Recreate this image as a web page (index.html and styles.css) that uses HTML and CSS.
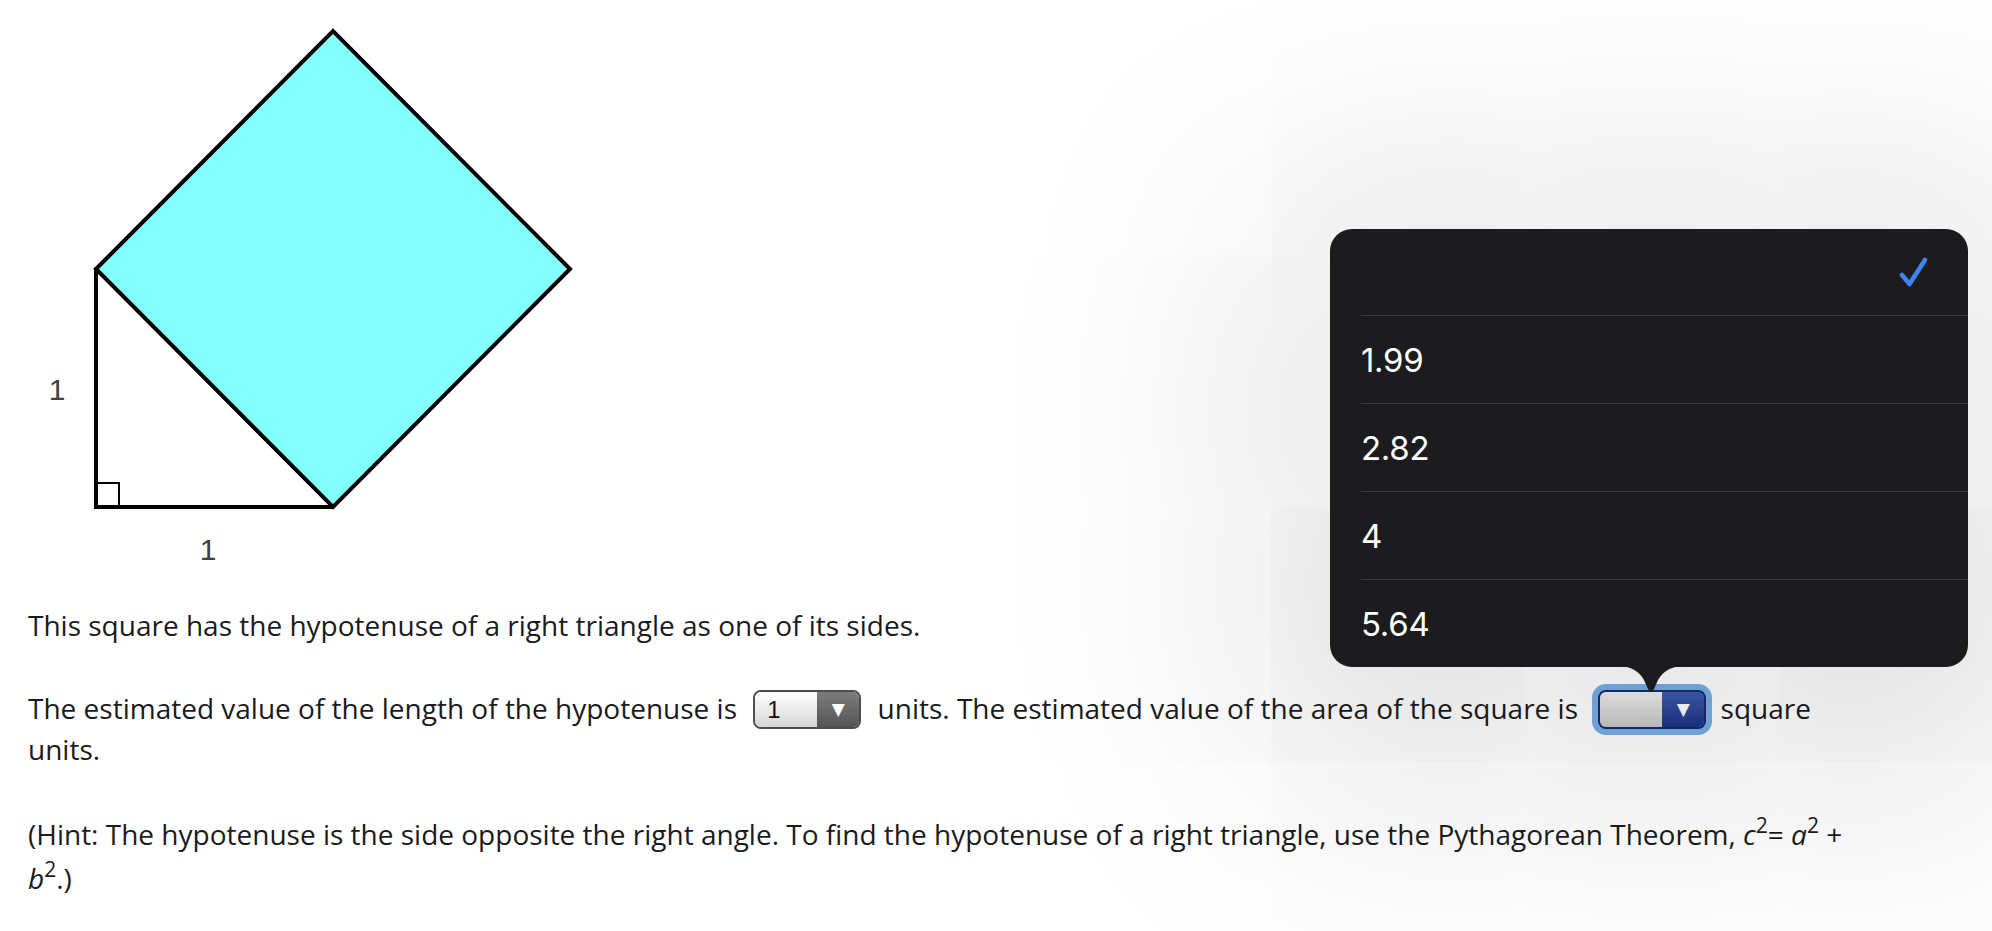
FILE: index.html
```html
<!DOCTYPE html>
<html lang="en">
<head>
<meta charset="utf-8">
<title>Hypotenuse square</title>
<link rel="stylesheet" href="styles.css">
</head>
<body>
<main class="page">
  <figure class="diagram">
    <svg class="diagram-svg" width="640" height="605" viewBox="0 0 640 605">
      <polygon points="96,269 333,31 570,269 333,507" fill="#84ffff" stroke="#000" stroke-width="4" stroke-linejoin="miter"/>
      <polyline points="96,269 96,507 333,507" fill="none" stroke="#000" stroke-width="4"/>
      <polyline points="96,483 119,483 119,507" fill="none" stroke="#000" stroke-width="2"/>
      <text x="57" y="400" class="lbl" text-anchor="middle">1</text>
      <text x="208" y="560" class="lbl" text-anchor="middle">1</text>
    </svg>
  </figure>
  <p class="q">This square has the hypotenuse of a right triangle as one of its sides.</p>
  <p class="q">The estimated value of the length of the hypotenuse is <span class="sel sel-gray"><span class="sel-val">1</span><span class="sel-btn">&#9660;</span></span> units. The estimated value of the area of the square is <span class="ring"><span class="sel sel-blue"><span class="sel-val"></span><span class="sel-btn">&#9660;</span></span></span> square units.</p>
  <p class="q hint">(Hint: The hypotenuse is the side opposite the right angle. To find the hypotenuse of a right triangle, use the Pythagorean Theorem, <i>c</i><sup>2</sup>= <i>a</i><sup>2</sup> + <i>b</i><sup>2</sup>.)</p>
</main>
<div class="popover">
  <ul class="menu">
    <li class="item item-first"><span class="check"><svg width="34" height="34" viewBox="0 0 34 34"><path d="M6 20 L13.5 29 L29 5" fill="none" stroke="#3b86f3" stroke-width="4.6" stroke-linecap="round" stroke-linejoin="round"/></svg></span></li>
    <li class="item"><span class="item-text">1.99</span></li>
    <li class="item"><span class="item-text">2.82</span></li>
    <li class="item"><span class="item-text">4</span></li>
    <li class="item"><span class="item-text">5.64</span></li>
  </ul>
  <svg class="arrow" width="66" height="27" viewBox="0 0 66 27"><path d="M0 0 Q18 0 26 14 L30 23 Q33 28 36 23 L40 14 Q48 0 66 0 Z" fill="#1c1c1e"/></svg>
</div>
</body>
</html>
```

FILE: styles.css
```css
html, body {
  margin: 0;
  padding: 0;
  background: #ffffff;
}
body {
  width: 1992px;
  height: 931px;
  overflow: hidden;
  position: relative;
  font-family: "Open Sans", "Noto Sans", sans-serif;
  color: #1b1b1b;
}
.page {
  padding: 0 112px 0 28px;
}
.diagram {
  margin: 0 0 0 -28px;
}
.diagram-svg {
  display: block;
}
.lbl {
  font-family: "Liberation Sans", Arial, sans-serif;
  font-size: 30px;
  fill: #404040;
}
.q {
  margin: 0 0 42px 0;
  font-size: 28px;
  line-height: 41px;
}
.hint {
  line-height: 44px;
}
.q i {
  font-style: italic;
}
.q sup {
  font-size: 21px;
  line-height: 0;
  vertical-align: 12px;
}
.sel {
  display: inline-flex;
  vertical-align: middle;
  width: 108px;
  height: 39px;
  box-sizing: border-box;
  border-radius: 8px;
  overflow: hidden;
  position: relative;
  top: -2px;
  line-height: 1;
  margin-top: -4px;
  margin-bottom: -4px;
}
.sel-gray {
  border: 2px solid #4d4d4d;
  margin-left: 9px;
  margin-right: 9px;
}
.sel-val {
  flex: 1;
  display: flex;
  align-items: center;
  padding-left: 12px;
  font-family: "Liberation Sans", Arial, sans-serif;
  font-size: 24px;
  color: #111;
}
.sel-btn {
  width: 42px;
  display: flex;
  align-items: center;
  justify-content: center;
  color: #fff;
  font-family: "DejaVu Sans", sans-serif;
  font-size: 17px;
}
.sel-gray .sel-val {
  background: linear-gradient(#ffffff, #d6d6d6);
}
.sel-gray .sel-btn {
  background: linear-gradient(#7c7c7c, #555555);
}
.ring {
  display: inline-block;
  vertical-align: middle;
  padding: 6px 6px;
  border-radius: 14px;
  background: #78aee6;
  margin: -8px 1px -8px 7px;
  position: relative;
  top: -2px;
  line-height: 0;
}
.sel-blue {
  border: 2px solid #1a2b6a;
  top: 0;
  margin: 0;
}
.sel-blue .sel-val {
  background: linear-gradient(#f0f0f0, #c6c6c6);
}
.sel-blue .sel-btn {
  background: linear-gradient(#3f5cb3, #1c3585);
}
.popover {
  position: absolute;
  left: 1330px;
  top: 229px;
  width: 638px;
}
.menu {
  list-style: none;
  margin: 0;
  padding: 0;
  background: #1c1c1e;
  border-radius: 22px;
  box-shadow: 0 40px 260px 90px rgba(0, 0, 0, 0.12);
  overflow: hidden;
  font-family: Inter, "Liberation Sans", sans-serif;
}
.item {
  height: 87px;
  margin-left: 31px;
  border-top: 1px solid #3a3a3c;
  display: flex;
  align-items: center;
  color: #ffffff;
  font-size: 33px;
  letter-spacing: -0.3px;
}
.item-first {
  height: 86px;
  border-top: 0;
  justify-content: flex-end;
  padding-right: 38px;
}
.check {
  display: flex;
}
.arrow {
  position: absolute;
  left: 288px;
  top: 437px;
  display: block;
}
```
